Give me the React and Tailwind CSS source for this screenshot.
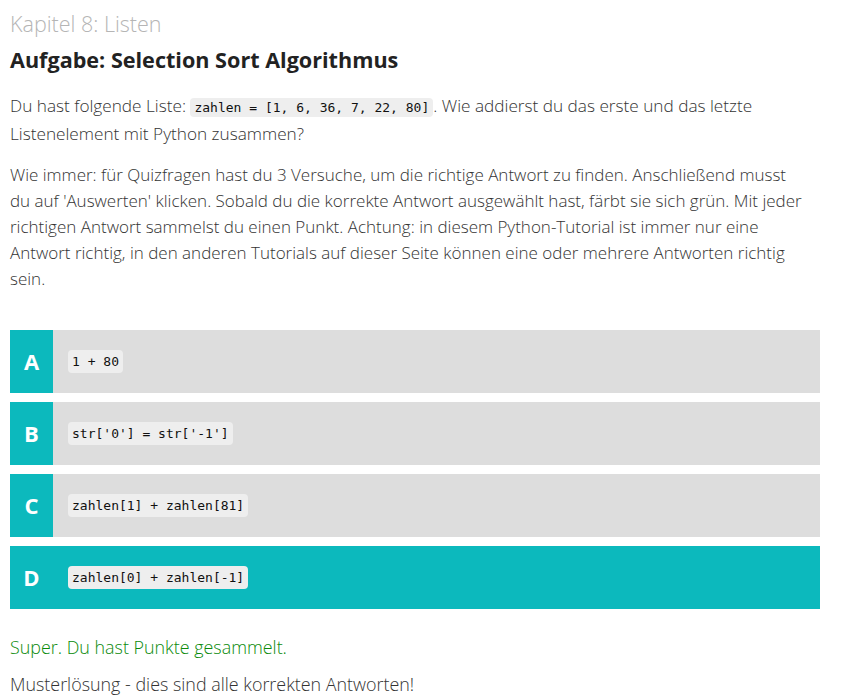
import React from "react";

const code = "font-['DejaVu_Sans_Mono',monospace] text-[13px] bg-[#eeeeee] rounded-[4px] px-[4px] py-[2px] text-[#111]";

function Option({ letter, text, active }) {
  return (
    <div className={`flex h-[63px] w-[810px] ${active ? "bg-[#0cb9bd]" : "bg-[#dddddd]"}`}>
      <div className="w-[43px] bg-[#0cb9bd] flex items-center justify-center text-white font-bold text-[22px]">
        {letter}
      </div>
      <div className="flex items-center pl-[15px]">
        <span className={code}>{text}</span>
      </div>
    </div>
  );
}

export default function App() {
  return (
    <div className="px-[10px] font-['Open_Sans',sans-serif] text-[#333] bg-white min-h-[699px]">
      <div className="pt-[9px] text-[21.5px] font-light text-[#b5b5b5] leading-[30px]">Kapitel 8: Listen</div>
      <h2 className="mt-[5px] text-[21.6px] font-bold text-[#222] leading-[32px]">Aufgabe: Selection Sort Algorithmus</h2>
      <p className="mt-[17px] text-[17.2px] font-light leading-[26px] w-[800px]">
        Du hast folgende Liste: <span className={code}>zahlen = [1, 6, 36, 7, 22, 80]</span>. Wie addierst du das erste und das letzte Listenelement mit Python zusammen?
      </p>
      <p className="mt-[15px] text-[17px] font-light leading-[26px] w-[840px]">
        Wie immer: für Quizfragen hast du 3 Versuche, um die richtige Antwort zu finden. Anschließend musst
        <br />
        du auf 'Auswerten' klicken. Sobald du die korrekte Antwort ausgewählt hast, färbt sie sich grün. Mit jeder
        <br />
        richtigen Antwort sammelst du einen Punkt. Achtung: in diesem Python-Tutorial ist immer nur eine
        <br />
        Antwort richtig, in den anderen Tutorials auf dieser Seite können eine oder mehrere Antworten richtig
        <br />
        sein.
      </p>
      <div className="mt-[38px] flex flex-col gap-[9px]">
        <Option letter="A" text="1 + 80" />
        <Option letter="B" text="str['0'] = str['-1']" />
        <Option letter="C" text="zahlen[1] + zahlen[81]" />
        <Option letter="D" text="zahlen[0] + zahlen[-1]" active />
      </div>
      <p className="mt-[25px] text-[17.9px] font-light leading-[26px] text-[#0a8a0a]">Super. Du hast Punkte gesammelt.</p>
      <p className="mt-[11px] text-[17.9px] font-light leading-[26px]">Musterlösung - dies sind alle korrekten Antworten!</p>
    </div>
  );
}
